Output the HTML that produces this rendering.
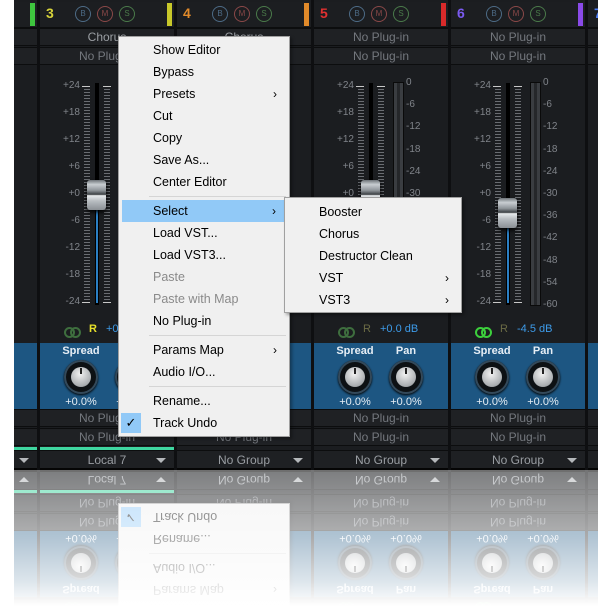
<!DOCTYPE html>
<html><head><meta charset="utf-8"><style>
*{margin:0;padding:0;box-sizing:border-box}
body{width:613px;height:613px;background:#fff;overflow:hidden;position:relative;font-family:"Liberation Sans",sans-serif}
#mix{position:absolute;left:14px;top:0;width:584px;height:470px;background:#0e0f11;overflow:hidden;
-webkit-box-reflect:below 0}
.s{position:absolute;top:0;width:134px;height:470px;background:#1b1d20}
.hd{position:absolute;left:0;top:2px;width:100%;height:26px;background:#1c1e21;border-bottom:1px solid #0c0d0e}
.num{position:absolute;left:6px;top:5px;font-size:14px;font-weight:bold}
.bms{position:absolute;top:6px;width:16px;height:16px;border-radius:50%;font-size:8px;text-align:center;line-height:13px;border:1.5px solid}
.bar{position:absolute;right:2px;top:3px;width:5px;height:23px}
.row{position:absolute;left:0;width:100%;height:18px;background:#1f2124;border-bottom:1px solid #0c0d0e;border-top:1px solid #0c0d0e;color:#74787e;font-size:12px;text-align:center;line-height:17px}
.lab{position:absolute;right:94px;font-size:10px;color:#80848a;width:30px;text-align:right}
.mlab{position:absolute;left:92px;font-size:10px;color:#80848a}
.tk{position:absolute;top:86px;height:217px;width:6px;background:repeating-linear-gradient(to bottom,#6a6d72 0 1px,transparent 1px 3px)}
.mj{position:absolute;width:8px;height:1px;background:#c8c8c8}
.slot{position:absolute;left:55px;top:83px;width:4px;height:222px;background:#000}
.fill{position:absolute;left:56px;width:2px;background:#2a7fc4}
.cap{position:absolute;left:47px;width:19px;height:30px;border-radius:3px;background:linear-gradient(#6d7378,#c9ced2 15%,#8d9398 35%,#3a3e42 48%,#e8ebed 52%,#b8bdc1 70%,#8a8f94 100%);box-shadow:0 2px 4px #000}
.met{position:absolute;left:79px;top:82px;width:11px;height:224px;background:#3a3d41;border:1px solid #0a0a0a}
.met:after{content:"";position:absolute;left:3px;top:0;width:3px;height:100%;background:#25272a}
.rrow{position:absolute;top:323px;left:0;width:100%;height:16px;font-size:11px}
.link{position:absolute;left:24px;top:4px;width:13px;height:7px}
.link:before,.link:after{content:"";position:absolute;top:0;width:7px;height:7px;border:2px solid currentColor;border-radius:50%}
.link:before{left:0}.link:after{left:6px}
.kn{position:absolute;top:343px;left:0;width:100%;height:66px;background:#1d5682}
.kl{position:absolute;top:2px;width:50px;margin-left:-25px;text-align:center;color:#e6eef5;font-size:11px;font-weight:bold}
.kv{position:absolute;top:53px;width:50px;margin-left:-25px;text-align:center;color:#e6eef5;font-size:11px}
.knob{position:absolute;top:17px;width:34px;height:34px;margin-left:-17px;border-radius:50%;background:#0d1114;box-shadow:0 0 0 2px #33495a inset,0 1px 2px #000}
.knob:before{content:"";position:absolute;left:7px;top:7px;width:20px;height:20px;border-radius:50%;background:radial-gradient(circle at 45% 35%,#f2f2f2,#a9adb0 70%,#6c7074)}
.knob:after{content:"";position:absolute;left:16px;top:8px;width:1.5px;height:6px;background:#222}
.gr{position:absolute;top:450px;left:0;width:100%;height:20px;background:#1e2023;border-top:1px solid #0c0d0e;border-bottom:2px solid #050505;color:#9a9ea3;font-size:12px;text-align:center;line-height:18px}
.gr i{position:absolute;right:8px;top:7px;width:0;height:0;border-left:5px solid transparent;border-right:5px solid transparent;border-top:5px solid #b5b8bb}
.menu{position:absolute;background:#f0f0f0;border:1px solid #a0a0a0;box-shadow:2px 2px 3px rgba(0,0,0,.35);font-size:12.5px;color:#000}
.it{position:absolute;left:0;width:100%;height:22px;line-height:22px;padding-left:34px}
.it.g{color:#8a8a8a}
.arr{position:absolute;right:12px;top:0;font-size:12px}
.sep{position:absolute;left:30px;right:3px;height:1px;background:#d5d5d5}
#fade{position:absolute;left:0;top:470px;width:613px;height:143px;background:linear-gradient(to bottom,rgba(255,255,255,.42),rgba(255,255,255,.52) 20%,rgba(255,255,255,.66) 48%,rgba(255,255,255,.85) 78%,#fff 95%)}
</style></head><body>
<div id="mix">
<div class="s" style="left:-111px">
 <div class="hd"></div><div class="bar" style="background:#3ec43e"></div>
 <div class="row" style="top:28px"></div><div class="row" style="top:47px"></div>
 <div class="kn"></div>
 <div class="row" style="top:409px"></div><div class="row" style="top:428px"></div>
 <div style="position:absolute;top:447px;left:0;width:100%;height:3px;background:#3fd6a0"></div>
 <div class="gr"><i></i></div>
</div>

<div class="s" style="left:26px">
 <div class="hd"></div><div class="num" style="color:#d6d23a">3</div>
 <div class="bms" style="left:35px;color:#4d6b86;border-color:#4d6b86">B</div>
 <div class="bms" style="left:57px;color:#8a4848;border-color:#8a4848">M</div>
 <div class="bms" style="left:79px;color:#4a7a4a;border-color:#4a7a4a">S</div>
 <div class="bar" style="background:#c8c82a"></div>
 <div class="row" style="top:28px;color:#9a9ea3">Chorus</div><div class="row" style="top:47px">No Plug-in</div>
 <div class="lab" style="top:80px">+24</div><div class="lab" style="top:107px">+18</div><div class="lab" style="top:134px">+12</div><div class="lab" style="top:161px">+6</div><div class="lab" style="top:188px">+0</div><div class="lab" style="top:215px">-6</div><div class="lab" style="top:242px">-12</div><div class="lab" style="top:269px">-18</div><div class="lab" style="top:296px">-24</div>
 <div class="tk" style="left:44px"></div><div class="tk" style="left:64px"></div>
 <div class="mj" style="left:42px;top:86px"></div><div class="mj" style="left:63px;top:86px"></div><div class="mj" style="left:42px;top:302px"></div><div class="mj" style="left:63px;top:302px"></div>
 <div class="slot"></div><div class="fill" style="top:205px;height:98px"></div>
 <div class="cap" style="top:180px"></div>
 <div class="rrow"><div class="link" style="color:#3e6e3e"></div><span style="position:absolute;left:49px;color:#e6e02a;font-weight:bold">R</span><span style="position:absolute;left:66px;color:#3d9be9">+0.0 dB</span></div>
 <div class="kn"><div class="kl" style="left:41px">Spread</div><div class="knob" style="left:41px"></div><div class="kv" style="left:41px">+0.0%</div><div class="kl" style="left:92px">Pan</div><div class="knob" style="left:92px"></div><div class="kv" style="left:92px">+0.0%</div></div>
 <div class="row" style="top:409px">No Plug-in</div><div class="row" style="top:428px">No Plug-in</div>
 <div style="position:absolute;top:447px;left:0;width:100%;height:3px;background:#3fd6a0"></div>
 <div class="gr">Local 7<i></i></div>
</div>

<div class="s" style="left:163px">
 <div class="hd"></div><div class="num" style="color:#e08a2a">4</div>
 <div class="bms" style="left:35px;color:#4d6b86;border-color:#4d6b86">B</div>
 <div class="bms" style="left:57px;color:#8a4848;border-color:#8a4848">M</div>
 <div class="bms" style="left:79px;color:#4a7a4a;border-color:#4a7a4a">S</div>
 <div class="bar" style="background:#e08a2a"></div>
 <div class="row" style="top:28px;color:#9a9ea3">Chorus</div><div class="row" style="top:47px">No Plug-in</div>
 <div class="lab" style="top:80px">+24</div><div class="lab" style="top:296px">-24</div>
 <div class="tk" style="left:44px"></div><div class="tk" style="left:64px"></div>
 <div class="slot"></div><div class="cap" style="top:180px"></div><div class="met"></div>
 <div class="rrow"><div class="link" style="color:#3e6e3e"></div><span style="position:absolute;left:49px;color:#6b6b45">R</span><span style="position:absolute;left:66px;color:#3d9be9">+0.0 dB</span></div>
 <div class="kn"><div class="kl" style="left:41px">Spread</div><div class="knob" style="left:41px"></div><div class="kv" style="left:41px">+0.0%</div><div class="kl" style="left:92px">Pan</div><div class="knob" style="left:92px"></div><div class="kv" style="left:92px">+0.0%</div></div>
 <div class="row" style="top:409px">No Plug-in</div><div class="row" style="top:428px">No Plug-in</div>
 <div class="gr">No Group<i></i></div>
</div>

<div class="s" style="left:300px">
 <div class="hd"></div><div class="num" style="color:#e03030">5</div>
 <div class="bms" style="left:35px;color:#4d6b86;border-color:#4d6b86">B</div>
 <div class="bms" style="left:57px;color:#8a4848;border-color:#8a4848">M</div>
 <div class="bms" style="left:79px;color:#4a7a4a;border-color:#4a7a4a">S</div>
 <div class="bar" style="background:#d82a2a"></div>
 <div class="row" style="top:28px">No Plug-in</div><div class="row" style="top:47px">No Plug-in</div>
 <div class="lab" style="top:80px">+24</div><div class="lab" style="top:107px">+18</div><div class="lab" style="top:134px">+12</div><div class="lab" style="top:161px">+6</div><div class="lab" style="top:188px">+0</div><div class="lab" style="top:215px">-6</div><div class="lab" style="top:242px">-12</div><div class="lab" style="top:269px">-18</div><div class="lab" style="top:296px">-24</div>
 <div class="tk" style="left:44px"></div><div class="tk" style="left:64px"></div>
 <div class="mj" style="left:42px;top:86px"></div><div class="mj" style="left:63px;top:86px"></div>
 <div class="slot"></div><div class="cap" style="top:180px"></div><div class="met"></div>
 <div class="mlab" style="top:77px">0</div><div class="mlab" style="top:99px">-6</div><div class="mlab" style="top:121px">-12</div><div class="mlab" style="top:144px">-18</div><div class="mlab" style="top:166px">-24</div><div class="mlab" style="top:188px">-30</div>
 <div class="rrow"><div class="link" style="color:#3e6e3e"></div><span style="position:absolute;left:49px;color:#6b6b45">R</span><span style="position:absolute;left:66px;color:#3d9be9">+0.0 dB</span></div>
 <div class="kn"><div class="kl" style="left:41px">Spread</div><div class="knob" style="left:41px"></div><div class="kv" style="left:41px">+0.0%</div><div class="kl" style="left:92px">Pan</div><div class="knob" style="left:92px"></div><div class="kv" style="left:92px">+0.0%</div></div>
 <div class="row" style="top:409px">No Plug-in</div><div class="row" style="top:428px">No Plug-in</div>
 <div class="gr">No Group<i></i></div>
</div>

<div class="s" style="left:437px">
 <div class="hd"></div><div class="num" style="color:#7a5af0">6</div>
 <div class="bms" style="left:35px;color:#4d6b86;border-color:#4d6b86">B</div>
 <div class="bms" style="left:57px;color:#8a4848;border-color:#8a4848">M</div>
 <div class="bms" style="left:79px;color:#4a7a4a;border-color:#4a7a4a">S</div>
 <div class="bar" style="background:#8a4ae8"></div>
 <div class="row" style="top:28px">No Plug-in</div><div class="row" style="top:47px">No Plug-in</div>
 <div class="lab" style="top:80px">+24</div><div class="lab" style="top:107px">+18</div><div class="lab" style="top:134px">+12</div><div class="lab" style="top:161px">+6</div><div class="lab" style="top:188px">+0</div><div class="lab" style="top:215px">-6</div><div class="lab" style="top:242px">-12</div><div class="lab" style="top:269px">-18</div><div class="lab" style="top:296px">-24</div>
 <div class="tk" style="left:44px"></div><div class="tk" style="left:64px"></div>
 <div class="mj" style="left:42px;top:86px"></div><div class="mj" style="left:63px;top:86px"></div><div class="mj" style="left:42px;top:302px"></div><div class="mj" style="left:63px;top:302px"></div>
 <div class="slot"></div><div class="fill" style="top:225px;height:78px"></div>
 <div class="cap" style="top:198px"></div><div class="met"></div>
 <div class="mlab" style="top:77px">0</div><div class="mlab" style="top:99px">-6</div><div class="mlab" style="top:121px">-12</div><div class="mlab" style="top:144px">-18</div><div class="mlab" style="top:166px">-24</div><div class="mlab" style="top:188px">-30</div><div class="mlab" style="top:210px">-36</div><div class="mlab" style="top:232px">-42</div><div class="mlab" style="top:255px">-48</div><div class="mlab" style="top:277px">-54</div><div class="mlab" style="top:299px">-60</div>
 <div class="rrow"><div class="link" style="color:#3ccf3c"></div><span style="position:absolute;left:49px;color:#6b6b45">R</span><span style="position:absolute;left:66px;color:#3d9be9">-4.5 dB</span></div>
 <div class="kn"><div class="kl" style="left:41px">Spread</div><div class="knob" style="left:41px"></div><div class="kv" style="left:41px">+0.0%</div><div class="kl" style="left:92px">Pan</div><div class="knob" style="left:92px"></div><div class="kv" style="left:92px">+0.0%</div></div>
 <div class="row" style="top:409px">No Plug-in</div><div class="row" style="top:428px">No Plug-in</div>
 <div class="gr">No Group<i></i></div>
</div>

<div class="s" style="left:574px">
 <div class="hd"></div><div class="num" style="color:#4a7af0">7</div>
 <div class="row" style="top:28px"></div><div class="row" style="top:47px"></div>
 <div class="kn"></div>
 <div class="row" style="top:409px"></div><div class="row" style="top:428px"></div>
 <div class="gr"></div>
</div>

<div class="menu" style="left:104px;top:36px;width:172px;height:401px">
 <div class="it" style="top:2px">Show Editor</div>
 <div class="it" style="top:24px">Bypass</div>
 <div class="it" style="top:46px">Presets<span class="arr">&#8250;</span></div>
 <div class="it" style="top:68px">Cut</div>
 <div class="it" style="top:90px">Copy</div>
 <div class="it" style="top:112px">Save As...</div>
 <div class="it" style="top:134px">Center Editor</div>
 <div class="sep" style="top:159px"></div>
 <div class="it" style="top:163px;left:3px;width:163px;padding-left:31px;background:#91c9f7">Select<span class="arr" style="right:9px">&#8250;</span></div>
 <div class="it" style="top:185px">Load VST...</div>
 <div class="it" style="top:207px">Load VST3...</div>
 <div class="it g" style="top:229px">Paste</div>
 <div class="it g" style="top:251px">Paste with Map</div>
 <div class="it" style="top:273px">No Plug-in</div>
 <div class="sep" style="top:298px"></div>
 <div class="it" style="top:302px">Params Map<span class="arr">&#8250;</span></div>
 <div class="it" style="top:324px">Audio I/O...</div>
 <div class="sep" style="top:349px"></div>
 <div class="it" style="top:353px">Rename...</div>
 <div class="it" style="top:375px">Track Undo</div>
 <div style="position:absolute;left:2px;top:376px;width:20px;height:20px;background:#91c9f7;text-align:center;line-height:20px;font-size:13px">&#10003;</div>
</div>

<div class="menu" style="left:270px;top:197px;width:178px;height:116px">
 <div class="it" style="top:3px">Booster</div>
 <div class="it" style="top:25px">Chorus</div>
 <div class="it" style="top:47px">Destructor Clean</div>
 <div class="it" style="top:69px">VST<span class="arr">&#8250;</span></div>
 <div class="it" style="top:91px">VST3<span class="arr">&#8250;</span></div>
</div>
</div>
<div id="fade"></div>
</body></html>
